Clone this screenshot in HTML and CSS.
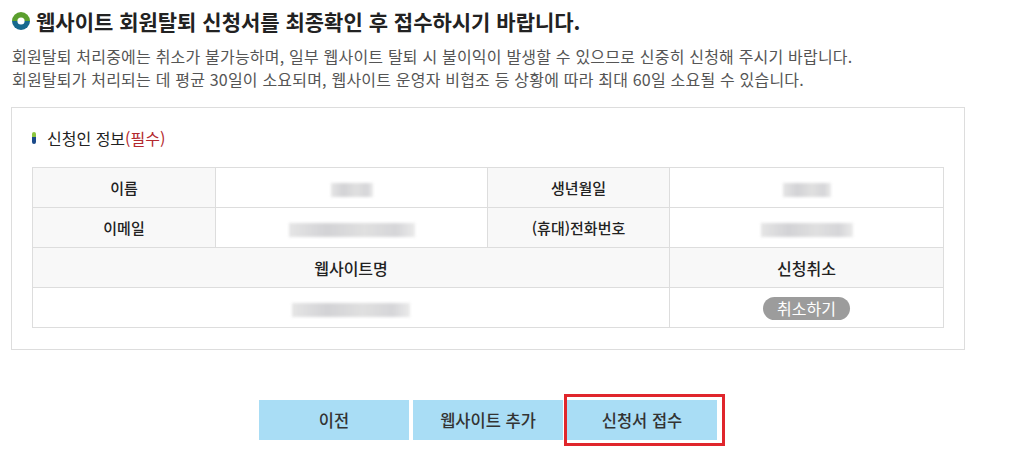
FILE: index.html
```html
<!DOCTYPE html>
<html lang="ko">
<head>
<meta charset="utf-8">
<title>회원탈퇴 신청서</title>
<link rel="stylesheet" href="styles.css">
</head>
<body>
<div class="page">
  <h1 class="title">
    <svg class="title-icon" width="18" height="18" viewBox="0 0 18 18">
      <path d="M0 9 A9 9 0 0 1 18 9 Z" fill="#5b9f2e"/>
      <path d="M0 9 A9 9 0 0 0 18 9 Z" fill="#17698e"/>
      <circle cx="9" cy="9" r="3.6" fill="#fff"/>
    </svg>
    웹사이트 회원탈퇴 신청서를 최종확인 후 접수하시기 바랍니다.
  </h1>
  <p class="notice">회원탈퇴 처리중에는 취소가 불가능하며, 일부 웹사이트 탈퇴 시 불이익이 발생할 수 있으므로 신중히 신청해 주시기 바랍니다.<br>회원탈퇴가 처리되는 데 평균 30일이 소요되며, 웹사이트 운영자 비협조 등 상황에 따라 최대 60일 소요될 수 있습니다.</p>

  <section class="box">
    <h2 class="sub-title"><span class="bar"></span>신청인 정보<em>(필수)</em></h2>
    <table class="info">
      <colgroup>
        <col class="c1"><col class="c2"><col class="c3"><col class="c4">
      </colgroup>
      <tr>
        <th>이름</th>
        <td><span class="blur b-name"></span></td>
        <th>생년월일</th>
        <td><span class="blur b-birth"></span></td>
      </tr>
      <tr>
        <th>이메일</th>
        <td><span class="blur b-mail"></span></td>
        <th>(휴대)전화번호</th>
        <td><span class="blur b-phone"></span></td>
      </tr>
      <tr>
        <th colspan="3" class="big">웹사이트명</th>
        <th class="big">신청취소</th>
      </tr>
      <tr>
        <td colspan="3"><span class="blur b-site"></span></td>
        <td><button class="cancel" type="button">취소하기</button></td>
      </tr>
    </table>
  </section>

  <div class="actions">
    <button class="btn" type="button">이전</button>
    <button class="btn" type="button">웹사이트 추가</button>
    <span class="highlight-wrap">
      <button class="btn" type="button">신청서 접수</button>
      <span class="highlight"></span>
    </span>
  </div>
</div>
</body>
</html>
```

FILE: styles.css
```css
* { box-sizing: border-box; }
html, body { margin: 0; padding: 0; background: #fff; }
body {
  font-family: "Noto Sans CJK KR", "Noto Sans", sans-serif;
  color: #333;
}
.page {
  width: 965px;
  padding: 7px 0 14px 11px;
}
.title {
  margin: 0;
  display: flex;
  align-items: center;
  gap: 6px;
  font-size: 21px;
  line-height: 28px;
  font-weight: 700;
  color: #222;
  padding-left: 1px;
}
.title-icon { flex: none; }
.notice {
  margin: 10px 0 0 1px;
  font-size: 16px;
  letter-spacing: 0.2px;
  line-height: 23px;
  color: #555;
}
.box {
  margin-top: 16px;
  border: 1px solid #ddd;
  padding: 19px 20px 21px;
}
.sub-title {
  margin: 0 0 18px;
  display: flex;
  align-items: center;
  font-size: 16px;
  line-height: 22px;
  font-weight: 400;
  color: #222;
}
.sub-title em {
  font-style: normal;
  color: #b3282d;
}
.bar {
  width: 4px;
  height: 12px;
  border-radius: 2px;
  margin-right: 11px;
  background: linear-gradient(#8cc63f 0 40%, #1b4a8a 40% 100%);
}
.info {
  width: 100%;
  border-collapse: collapse;
  table-layout: fixed;
}
.c1 { width: 183px; }
.c2 { width: 272px; }
.c3 { width: 182px; }
.c4 { width: 274px; }
.info th, .info td {
  border: 1px solid #ddd;
  height: 40px;
  padding: 0;
  text-align: center;
  vertical-align: middle;
  font-size: 15px;
}
.info th {
  background: #f8f8f8;
  font-weight: 500;
  color: #222;
}
.info th.big {
  font-size: 16px;
  font-weight: 500;
  color: #222;
}
.blur {
  display: inline-block;
  vertical-align: middle;
  height: 14px;
  background: linear-gradient(90deg, #ddd, #c4c4c8 30%, #d6d6d6 60%, #c8c8cc 85%, #e4e4e4);
  opacity: 0.75;
  filter: blur(1.5px);
}
.b-name { width: 42px; }
.b-birth { width: 48px; }
.b-mail { width: 126px; }
.b-phone { width: 92px; }
.b-site { width: 118px; }
.cancel {
  font-family: inherit;
  border: 0;
  background: #9c9c9c;
  color: #fff;
  font-size: 16px;
  width: 87px;
  height: 23px;
  border-radius: 12px;
  padding: 0;
  line-height: 23px;
  vertical-align: middle;
}
.actions {
  margin-top: 50px;
  display: flex;
  justify-content: center;
  align-items: flex-start;
  gap: 4px;
}
.btn {
  font-family: inherit;
  width: 150px;
  height: 40px;
  border: 0;
  background: #a9ddf5;
  color: #333;
  font-size: 16.5px;
  font-weight: 500;
  padding: 0;
}
.highlight-wrap {
  position: relative;
  display: flex;
}
.highlight {
  position: absolute;
  left: -3px;
  right: -8px;
  top: -6px;
  bottom: -6px;
  border: 3px solid #e0262c;
}
```
